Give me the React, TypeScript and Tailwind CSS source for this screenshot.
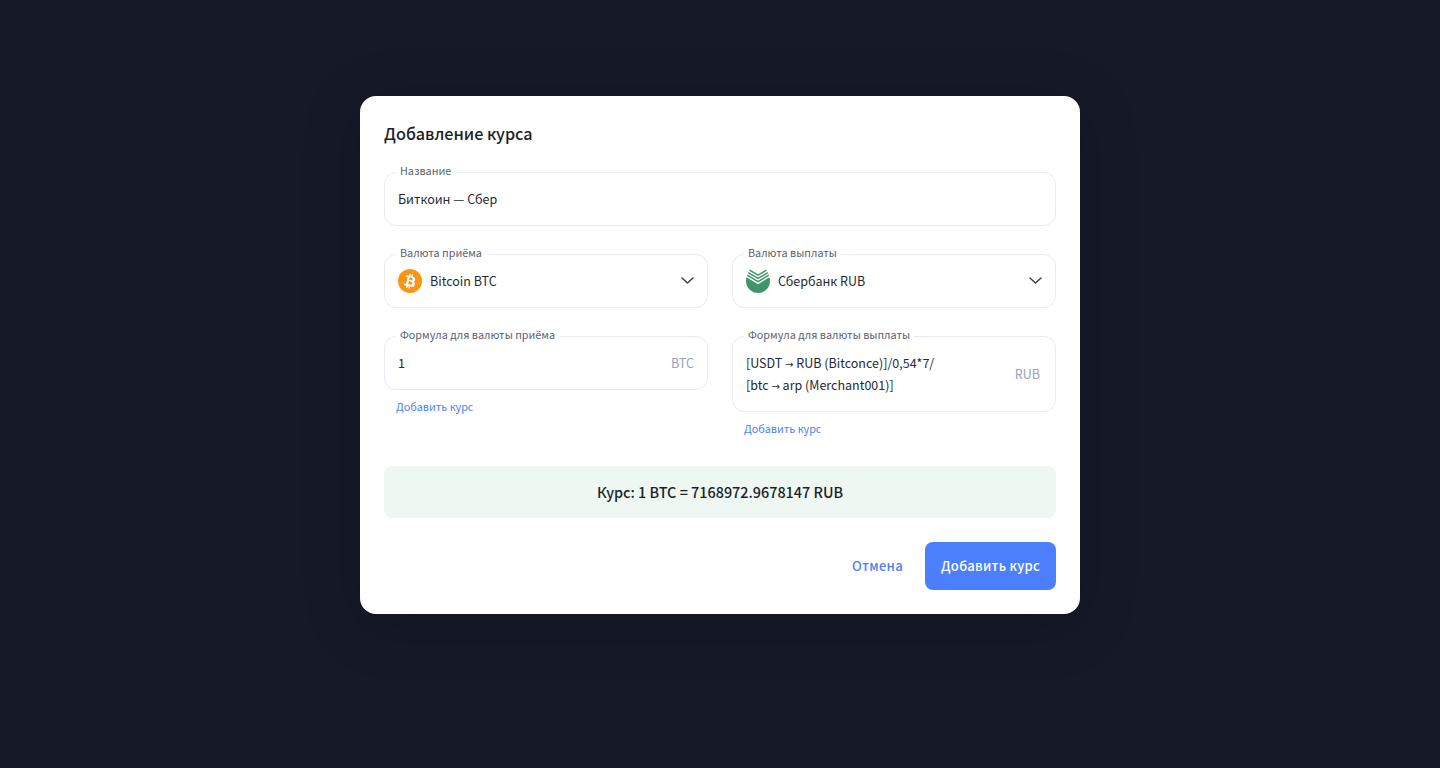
import React from 'react';

const FONT = "font-['Noto_Sans_CJK_SC','Noto_Sans',sans-serif]";

const FloatLabel = ({ text }: { text: string }) => (
  <span className="absolute left-[11px] top-[-12px] bg-white px-[4px] text-[10.8px] leading-[18px] text-[#5c6270]">
    {text}
  </span>
);

const Arrow = () => <span className="font-['DejaVu_Sans',sans-serif] text-[10px] leading-none">→</span>;

const BitcoinIcon = () => (
  <svg width="24" height="24" viewBox="0 0 24 24" className="shrink-0">
    <circle cx="12" cy="12" r="12" fill="#fb9518" />
    <path
      fill="#fff"
      d="M17.1 10.500c.2-1.500-.9-2.300-2.500-2.800l.5-2.100-1.300-.3-.5 2c-.3-.1-.7-.2-1-.3l.5-2-1.300-.3-.5 2.100c-.3-.1-.6-.1-.8-.2l-1.800-.4-.3 1.400s1 .2.9.2c.5.1.6.5.6.7l-.6 2.400-1 3.600c0 .2-.2.4-.6.3 0 0-.9-.2-.9-.2l-.6 1.500 1.700.4c.3.1.6.2.9.2l-.5 2.100 1.300.3.5-2.100c.4.1.7.2 1 .3l-.5 2.100 1.300.3.5-2.100c2.200.4 3.900.2 4.600-1.700.6-1.600 0-2.500-1.200-3.100.8-.2 1.500-.8 1.600-2zm-2.900 4c-.4 1.600-3.100.7-4 .5l.7-2.900c.9.2 3.700.7 3.300 2.400zm.4-4.100c-.4 1.500-2.600.7-3.400.5l.6-2.600c.8.2 3.200.5 2.800 2.100z"
    />
  </svg>
);

const SberIcon = () => (
  <svg width="24" height="24" viewBox="0 0 24 24" className="shrink-0">
    <path fill="#3f9668" d="M.6 8.300 12 15.200l11.400-6.900A12 12 0 0 1 24 12a12 12 0 0 1-24 0 12 12 0 0 1 .6-3.700z" />
    <path fill="none" stroke="#3f9668" strokeWidth="1.500" d="M3.600 1.200 12 6.200l8.400-5" />
    <path fill="none" stroke="#3f9668" strokeWidth="1.500" d="M2.200 3.600 12 9.400l9.800-5.800" />
    <path fill="none" stroke="#3f9668" strokeWidth="1.500" d="M1.200 6.200 12 12.600l10.800-6.400" />
  </svg>
);

const Chevron = () => (
  <svg width="13" height="8" viewBox="0 0 13 8" fill="none" className="shrink-0">
    <path d="M1 1l5.500 5L12 1" stroke="#3a404d" strokeWidth="1.500" strokeLinecap="round" strokeLinejoin="round" />
  </svg>
);

const SelectField = ({
  label,
  icon,
  value
}: {
  label: string;
  icon: React.ReactNode;
  value: string;
}) => (
  <div className="relative flex h-[54px] items-center gap-[8px] rounded-[12px] border border-[#e9ebf2] pl-[13px] pr-[13px]">
    <FloatLabel text={label} />
    {icon}
    <span className="flex-1 text-[12.5px] leading-[22px] text-[#252a36]">{value}</span>
    <Chevron />
  </div>
);

const AddRateLink = () => (
  <a className="mt-[7px] block pl-[12px] text-[10.8px] leading-[18px] text-[#4b7ffb]">Добавить курс</a>
);

export default function App() {
  return (
    <div className={`${FONT} flex h-[768px] w-full items-start justify-center bg-[#161a27] pt-[96px]`}>
      <div className="flex h-[518px] w-[720px] flex-col rounded-[16px] bg-white px-[24px] pt-[23px] shadow-[0_10px_60px_rgba(0,0,0,0.2)]">
        <h2 className="text-[16.200px] font-medium leading-[28px] text-[#1a1f2b]">Добавление курса</h2>

        <div className="relative mt-[25px] flex h-[54px] items-center rounded-[12px] border border-[#e9ebf2] px-[13px]">
          <FloatLabel text="Название" />
          <span className="text-[12.5px] leading-[22px] text-[#252a36]">Биткоин — Сбер</span>
        </div>

        <div className="mt-[28px] grid grid-cols-2 gap-x-[24px]">
          <SelectField label="Валюта приёма" icon={<BitcoinIcon />} value="Bitcoin BTC" />
          <SelectField label="Валюта выплаты" icon={<SberIcon />} value="Сбербанк RUB" />
        </div>

        <div className="mt-[28px] grid h-[102px] grid-cols-2 gap-x-[24px]">
          <div>
            <div className="relative flex h-[54px] items-center justify-between rounded-[12px] border border-[#e9ebf2] px-[13px]">
              <FloatLabel text="Формула для валюты приёма" />
              <span className="text-[12.5px] leading-[22px] text-[#252a36]">1</span>
              <span className="text-[12.5px] leading-[22px] text-[#9aa3b5]">BTC</span>
            </div>
            <AddRateLink />
          </div>
          <div>
            <div className="relative flex h-[76px] items-center justify-between rounded-[12px] border border-[#e9ebf2] pl-[13px] pr-[15px]">
              <FloatLabel text="Формула для валюты выплаты" />
              <span className="text-[12.5px] leading-[22px] text-[#252a36]">
                [USDT <Arrow /> RUB (Bitconce)]/0,54*7/
                <br />
                [btc <Arrow /> arp (Merchant001)]
              </span>
              <span className="text-[12.5px] leading-[22px] text-[#9aa3b5]">RUB</span>
            </div>
            <AddRateLink />
          </div>
        </div>

        <div className="mt-[28px] flex h-[52px] items-center justify-center rounded-[8px] bg-[#eef7f2] text-[14.400px] font-medium leading-[24px] text-[#1a1f2b]">
          Курс: 1 BTC = 7168972.9678147 RUB
        </div>

        <div className="mt-[24px] flex items-center justify-end gap-[22px]">
          <button className="text-[13px] font-medium leading-[22px] tracking-[0.3px] text-[#4b7ffb]">Отмена</button>
          <button className="h-[48px] w-[131px] rounded-[8px] bg-[#4b7ffb] text-[13px] font-medium leading-[22px] tracking-[0.3px] text-white">
            Добавить курс
          </button>
        </div>
      </div>
    </div>
  );
}
